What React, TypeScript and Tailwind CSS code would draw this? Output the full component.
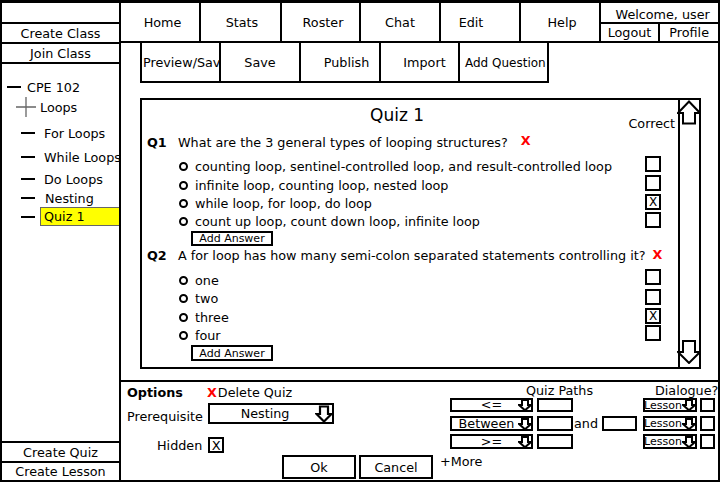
import React from "react";

function BigUp() {
  return (
    <svg width="24" height="25" viewBox="0 0 24 25" className="-ml-[3px] block shrink-0">
      <path d="M12 1.5 L1 13 L6 13 L6 23.5 L18 23.5 L18 13 L23 13 Z" fill="white" stroke="black" strokeWidth="2" />
    </svg>
  );
}

function BigDown() {
  return (
    <svg width="24" height="24" viewBox="0 0 24 24" className="-ml-[3px] mb-[3px] block shrink-0">
      <path d="M6 1 L18 1 L18 12 L23 12 L12 23 L1 12 L6 12 Z" fill="white" stroke="black" strokeWidth="2" />
    </svg>
  );
}

function MidArrow() {
  return (
    <svg width="18" height="18" viewBox="0 0 18 18" className="block shrink-0 -mr-[1px]">
      <path d="M5 1.5 H13 V9 H16.5 L9 16.5 L1.5 9 H5 Z" fill="white" stroke="black" strokeWidth="2.2" />
    </svg>
  );
}

function TinyArrow() {
  return (
    <svg width="14" height="12" viewBox="0 0 14 12" className="block shrink-0 -mr-[1px]">
      <path d="M4 1 H10 V6 H13 L7 11.3 L1 6 H4 Z" fill="white" stroke="black" strokeWidth="2" />
    </svg>
  );
}

function Cross() {
  return (
    <svg width="20" height="20" viewBox="0 0 20 20" className="block shrink-0 ml-[14px]">
      <path d="M0 10 H20 M10 0 V20" stroke="#666" strokeWidth="1.3" />
    </svg>
  );
}

type Ans = { text: string; row: string; cb: string; x?: boolean };

function AnswerRow({ a }: { a: Ans }) {
  return (
    <div className={`flex items-center shrink-0 ${a.row}`}>
      <div className="ml-[37px] w-[9px] h-[9px] rounded-full border-2 border-black shrink-0" />
      <span className="ml-[7px] whitespace-nowrap">{a.text}</span>
      <div
        className={`ml-auto mr-[17px] w-[16px] h-[16px] border-2 border-black self-start flex items-center justify-center text-[12px] leading-none shrink-0 ${a.cb}`}
      >
        {a.x ? "X" : ""}
      </div>
    </div>
  );
}

const q1: Ans[] = [
  { text: "counting loop, sentinel-controlled loop, and result-controlled loop", row: "h-[19px]", cb: "-mt-[1px]" },
  { text: "infinite loop, counting loop, nested loop", row: "h-[18px]", cb: "-mt-[1px]" },
  { text: "while loop, for loop, do loop", row: "h-[18px]", cb: "mt-0", x: true },
  { text: "count up loop, count down loop, infinite loop", row: "h-[18px]", cb: "mt-0" },
];

const q2: Ans[] = [
  { text: "one", row: "h-[18px] mt-[7px]", cb: "-mt-[2px]" },
  { text: "two", row: "h-[19px]", cb: "mt-0" },
  { text: "three", row: "h-[19px]", cb: "mt-0", x: true },
  { text: "four", row: "h-[16px]", cb: "-mt-[2px]" },
];

function AddAnswer({ extra }: { extra: string }) {
  return (
    <div
      className={`ml-[49px] w-[82px] border-2 border-black flex items-center justify-center text-[11px] leading-none shrink-0 ${extra}`}
    >
      Add Answer
    </div>
  );
}

function TreeDash({ ml }: { ml: string }) {
  return <div className={`w-[14px] h-[2px] bg-black shrink-0 ${ml}`} />;
}

function Sidebar() {
  return (
    <div className="w-[119px] shrink-0 border-r-2 border-black flex flex-col">
      <div className="h-[21px] border-b-2 border-black shrink-0" />
      <div className="h-[20px] border-b-2 border-black shrink-0 flex items-center justify-center">Create Class</div>
      <div className="h-[20px] border-b-2 border-black shrink-0 flex items-center justify-center">Join Class</div>
      <div className="flex-1 flex flex-col">
        <div className="h-[18px] mt-[14px] flex items-center">
          <TreeDash ml="ml-[5px]" />
          <span className="ml-[6px]">CPE 102</span>
        </div>
        <div className="h-[18px] mt-[2px] flex items-center">
          <Cross />
          <span className="ml-[4px]">Loops</span>
        </div>
        <div className="h-[18px] mt-[8px] flex items-center">
          <TreeDash ml="ml-[19px]" />
          <span className="ml-[9px]">For Loops</span>
        </div>
        <div className="h-[18px] mt-[6px] flex items-center">
          <TreeDash ml="ml-[19px]" />
          <span className="ml-[9px] whitespace-nowrap">While Loops</span>
        </div>
        <div className="h-[18px] mt-[4px] flex items-center">
          <TreeDash ml="ml-[19px]" />
          <span className="ml-[9px]">Do Loops</span>
        </div>
        <div className="h-[18px] mt-[1px] flex items-center">
          <TreeDash ml="ml-[19px]" />
          <span className="ml-[10px]">Nesting</span>
        </div>
        <div className="h-[19px] flex items-center">
          <TreeDash ml="ml-[19px]" />
          <div className="ml-[5px] flex-1 h-full bg-[#ffff00] border border-[#666] border-r-0 flex items-center pl-[3px]">
            Quiz 1
          </div>
        </div>
      </div>
      <div className="h-[20px] border-t-2 border-black shrink-0 flex items-center justify-center">Create Quiz</div>
      <div className="h-[19px] border-t-2 border-black shrink-0 flex items-center justify-center">Create Lesson</div>
    </div>
  );
}

function Nav() {
  return (
    <div className="h-[40px] shrink-0 border-b-2 border-black flex">
      <div className="w-[80px] border-r-2 border-black flex items-center justify-center pl-[5px]">Home</div>
      <div className="w-[81px] border-r-2 border-black flex items-center justify-center pl-[3px]">Stats</div>
      <div className="w-[79px] border-r-2 border-black flex items-center justify-center pl-[5px]">Roster</div>
      <div className="w-[80px] border-r-2 border-black flex items-center justify-center">Chat</div>
      <div className="w-[80px] border-r-2 border-black flex items-center justify-center pr-[18px]">Edit</div>
      <div className="w-[80px] border-r-2 border-black flex items-center justify-center pl-[4px]">Help</div>
      <div className="flex-1 flex flex-col">
        <div className="h-[21px] border-b-2 border-black flex items-center justify-center pt-[4px] pl-[6px] whitespace-nowrap">
          Welcome, user
        </div>
        <div className="flex-1 flex">
          <div className="w-[59px] border-r-2 border-black flex items-center justify-center">Logout</div>
          <div className="flex-1 flex items-center justify-center">Profile</div>
        </div>
      </div>
    </div>
  );
}

function Toolbar() {
  return (
    <div className="h-[40px] shrink-0 flex pl-[19px]">
      <div className="w-[81px] border-l-2 border-r-2 border-b-2 border-black flex items-center pl-[1px] overflow-hidden whitespace-nowrap">
        Preview/Save
      </div>
      <div className="w-[80px] border-r-2 border-b-2 border-black flex items-center justify-center">Save</div>
      <div className="w-[80px] border-r-2 border-b-2 border-black flex items-center justify-center pl-[13px]">Publish</div>
      <div className="w-[79px] border-r-2 border-b-2 border-black flex items-center justify-center pl-[10px]">Import</div>
      <div className="w-[89px] border-r-2 border-b-2 border-black flex items-center pl-[5px] pt-[2px] whitespace-nowrap text-[12px]">
        Add Question
      </div>
    </div>
  );
}

function QuizBox() {
  return (
    <div className="mt-[15px] ml-[19px] w-[561px] h-[271px] shrink-0 border-2 border-black flex">
      <div className="flex-1 flex flex-col">
        <div className="h-[33px] shrink-0 flex items-start">
          <span className="ml-[228px] mt-[5px] text-[17px] leading-[20px] whitespace-nowrap">Quiz 1</span>
          <span className="ml-auto mr-[3px] mt-[16px]">Correct</span>
        </div>
        <div className="h-[18px] shrink-0 flex items-center pl-[5px]">
          <span className="w-[31px] font-bold shrink-0">Q1</span>
          <span className="whitespace-nowrap">What are the 3 general types of looping structures?</span>
          <span className="ml-[13px] -mt-[3px] font-bold text-[#ff0000]">X</span>
        </div>
        <div className="h-[6px] shrink-0" />
        {q1.map((a) => (
          <AnswerRow key={a.text} a={a} />
        ))}
        <AddAnswer extra="mt-[1px] h-[15px]" />
        <div className="h-[18px] shrink-0 flex items-center pl-[5px]">
          <span className="w-[31px] font-bold shrink-0">Q2</span>
          <span className="whitespace-nowrap">A for loop has how many semi-colon separated statements controlling it?</span>
          <span className="ml-[7px] -mt-[2px] font-bold text-[#ff0000]">X</span>
        </div>
        {q2.map((a) => (
          <AnswerRow key={a.text} a={a} />
        ))}
        <AddAnswer extra="mt-[2px] h-[16px]" />
      </div>
      <div className="w-[21px] shrink-0 border-l-2 border-black flex flex-col justify-between">
        <BigUp />
        <BigDown />
      </div>
    </div>
  );
}

function PathRow({ label, pl, row, middle }: { label: string; pl: string; row: string; middle?: boolean }) {
  return (
    <div className={`flex shrink-0 ${row}`}>
      <div className="ml-[1px] w-[83px] border-2 border-black flex items-center leading-[12px]">
        <span className={`flex-1 whitespace-nowrap ${pl}`}>{label}</span>
        <TinyArrow />
      </div>
      <div className="ml-[4px] w-[36px] border-2 border-black" />
      <div className="w-[70px] flex items-center">
        {middle ? (
          <>
            <span className="ml-[1px] w-[28px] leading-[12px]">and</span>
            <div className="w-[35px] h-full border-2 border-black" />
          </>
        ) : null}
      </div>
      <div className="w-[54px] border-2 border-black flex items-center text-[11px] leading-[11px] overflow-visible">
        <span className="-ml-[1px] flex-1 whitespace-nowrap">Lesson</span>
        <TinyArrow />
      </div>
      <div className="ml-[3px] w-[15px] border-2 border-black" />
    </div>
  );
}

function Options() {
  return (
    <div className="mt-[11px] flex-1 border-t-2 border-black flex flex-col">
      <div className="h-[73px] shrink-0 flex">
        <div className="w-[328px] shrink-0 flex flex-col">
          <div className="h-[21px] flex items-center pl-[6px]">
            <span className="w-[80px] font-bold">Options</span>
            <span className="font-bold text-[#ff0000]">X</span>
            <span className="ml-[1px]">Delete Quiz</span>
          </div>
          <div className="h-[22px] flex items-start pl-[6px]">
            <span className="w-[81px] mt-[6px] whitespace-nowrap">Prerequisite</span>
            <div className="w-[126px] h-[21px] border-2 border-black flex items-center">
              <span className="flex-1 text-center pl-[5px]">Nesting</span>
              <MidArrow />
            </div>
          </div>
          <div className="mt-[10px] h-[20px] flex items-center">
            <span className="ml-[36px]">Hidden</span>
            <div className="ml-[6px] w-[16px] h-[16px] border-2 border-black flex items-center justify-center text-[13px] leading-none">
              X
            </div>
          </div>
        </div>
        <div className="flex-1 flex flex-col">
          <div className="h-[16px] shrink-0 flex items-center whitespace-nowrap">
            <span className="w-[206px] pl-[77px]">Quiz Paths</span>
            <span>Dialogue?</span>
          </div>
          <PathRow label="<=" pl="pl-[13px] text-center" row="h-[14px]" />
          <PathRow label="Between" pl="pl-[3px] text-center" row="h-[15px] mt-[4px]" middle />
          <PathRow label=">=" pl="pl-[13px] text-center" row="h-[15px] mt-[3px]" />
        </div>
      </div>
      <div className="flex-1 flex items-start">
        <div className="ml-[161px] w-[74px] h-[24px] border-2 border-black flex items-center justify-center">Ok</div>
        <div className="ml-[3px] w-[74px] h-[24px] border-2 border-black flex items-center justify-center">Cancel</div>
        <span className="ml-[7px] -mt-[1px]">+More</span>
      </div>
    </div>
  );
}

export default function App() {
  return (
    <div className="w-[721px] h-[483px] bg-white text-black font-['DejaVu_Sans',sans-serif] text-[12.75px] leading-[15px]">
      <div className="w-[720px] h-[482px] border-t-[3px] border-l-2 border-r-2 border-b-2 border-black flex">
        <Sidebar />
        <div className="flex-1 flex flex-col">
          <Nav />
          <Toolbar />
          <QuizBox />
          <Options />
        </div>
      </div>
    </div>
  );
}
